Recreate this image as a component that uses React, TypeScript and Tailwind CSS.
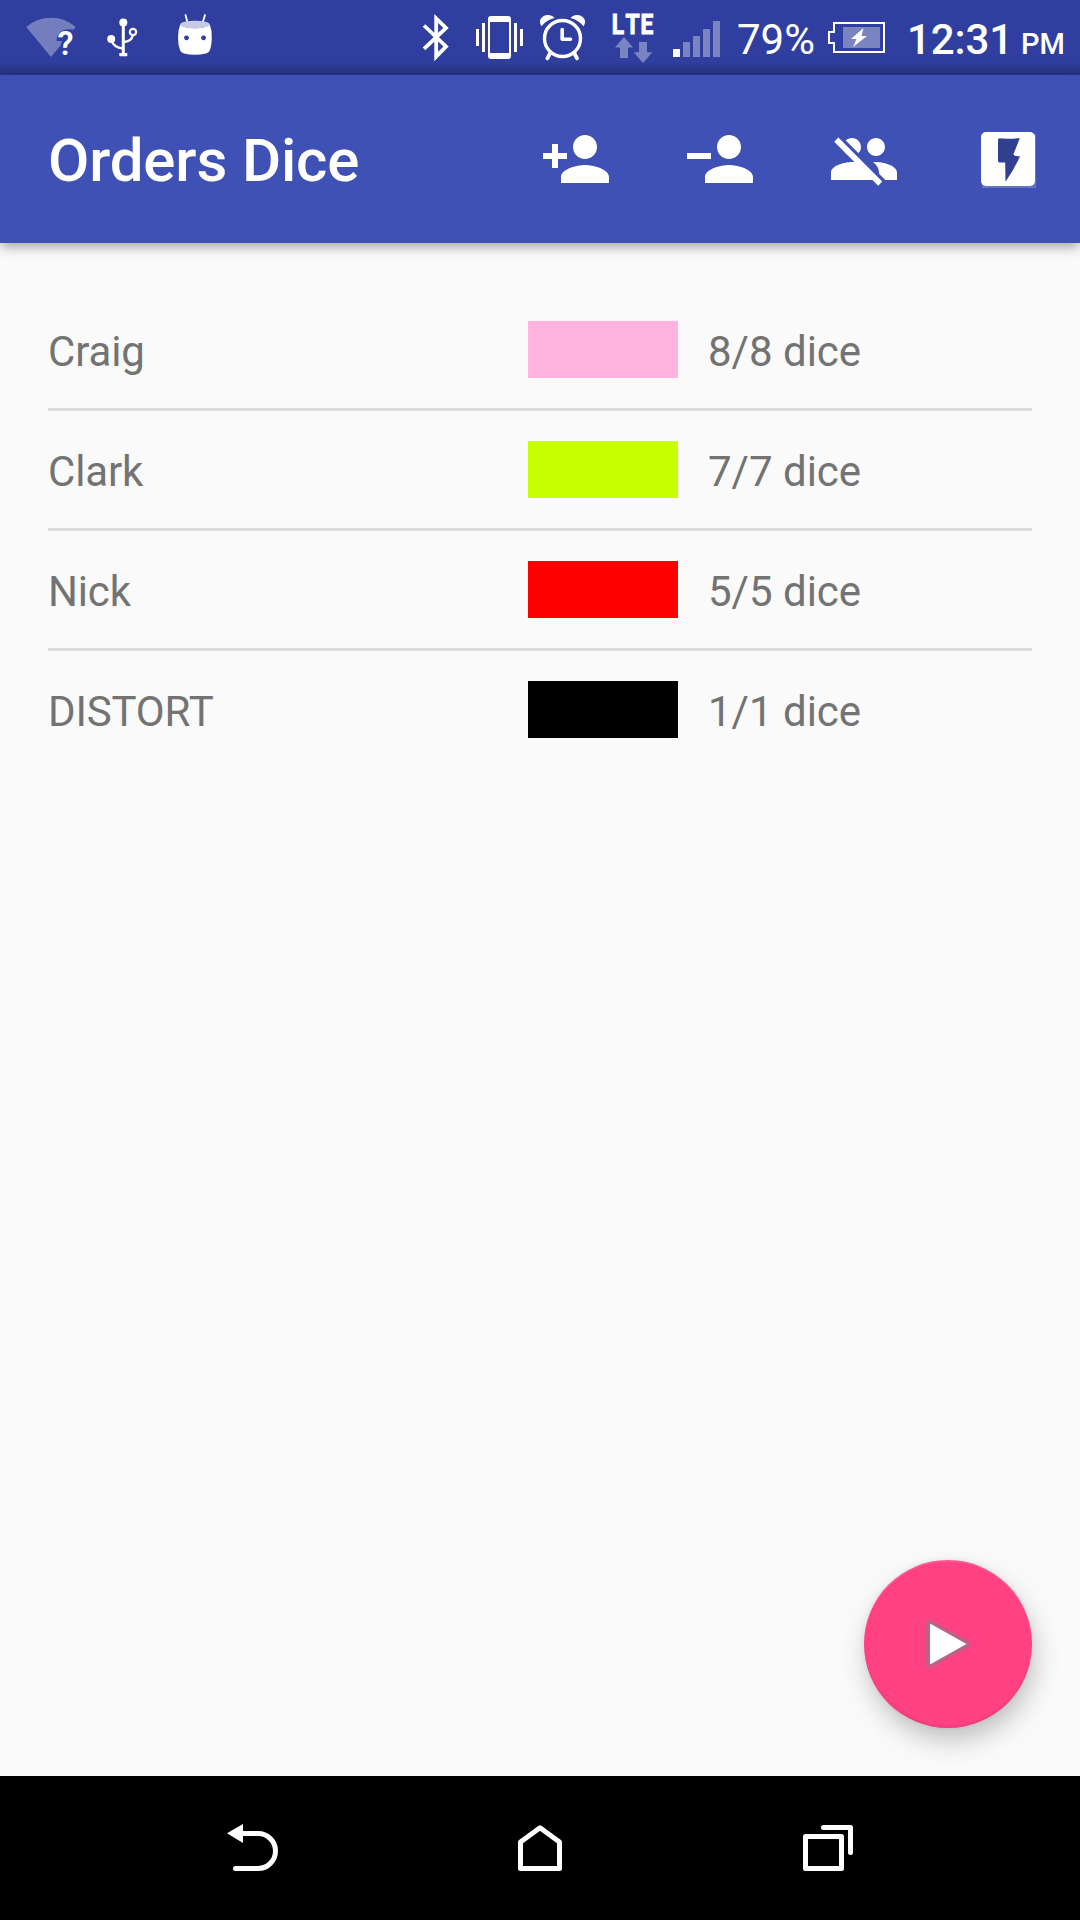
import React from "react";

type GlyphProps = { box: string; className: string; children: React.ReactNode };

function Glyph({ box, className, children }: GlyphProps) {
  return (
    <svg viewBox={box} className={`block shrink-0 ${className}`} fill="#fff" aria-hidden="true">
      {children}
    </svg>
  );
}

function StatusBar() {
  return (
    <div className="relative flex h-[75px] shrink-0 items-start overflow-hidden bg-[#303f9f] text-white">
      <Glyph box="26 0 50 75" className="ml-[26px] h-[75px] w-[50px]">
        <path d="M51 57 L26.3 27 Q37 17.7 51 17.7 Q65 17.7 75.7 27 L73.5 29.8 Q69 28.6 64 30 Q56 33 56.5 41 H62 L60.5 45.5 Z" opacity=".33" />
        <text x="57.6" y="55" fontSize="32.5" fontWeight="600" fontFamily="Roboto">?</text>
      </Glyph>
      <Glyph box="106 0 32 75" className="ml-[30px] h-[75px] w-8">
        <circle cx="123.3" cy="22.5" r="4" />
        <circle cx="111.2" cy="39" r="4" />
        <circle cx="133" cy="32" r="3.2" fill="none" stroke="#fff" strokeWidth="2.2" />
        <rect x="121.8" y="22" width="3" height="33" />
        <rect x="119.3" y="53" width="8" height="3.2" rx=".6" />
        <path d="M111.5 40 Q113.5 47.5 123 48.6 M123.5 42 Q131.5 41.5 132.7 35.5" fill="none" stroke="#fff" strokeWidth="2.4" />
      </Glyph>
      <Glyph box="177 0 36 75" className="ml-[39px] h-[75px] w-9">
        <path d="M185.5 15 L187.5 22.5 M205 15 L202.7 22.5" stroke="#fff" strokeWidth="1.8" strokeLinecap="round" />
        <ellipse cx="195" cy="24.5" rx="14.8" ry="3.8" fill="#c5cae6" />
        <path fillRule="evenodd" d="M180.2 24.5 C183 29.6 207 29.6 209.8 24.5 Q212 30 211.8 38 Q211.5 46 209.8 50.5 Q209 52.7 206 53.4 Q195 56.2 184 53.4 Q181 52.7 180.2 50.5 Q178 45 178 38 Q178 30 180.2 24.5Z M186.5 35.4a2.4 2.4 0 1 0 .01 0Z M203.5 35.4a2.4 2.4 0 1 0 .01 0Z" />
      </Glyph>

      <Glyph box="422 0 28 75" className="ml-[209px] h-[75px] w-7">
        <path d="M424 25.5 L446 46.5 L436.2 56.5 V18.5 L446 28 L424 48.8" fill="none" stroke="#fff" strokeWidth="3.8" />
      </Glyph>
      <Glyph box="475 0 49 75" className="ml-[25px] h-[75px] w-[49px]">
        <path d="M476 29h3v17h-3z M482 23h3v29h-3z M514 23h3v29h-3z M520 29h3v17h-3z" />
        <path fillRule="evenodd" d="M491 16h17a3 3 0 0 1 3 3v37a3 3 0 0 1-3 3h-17a3 3 0 0 1-3-3V19a3 3 0 0 1 3-3z M490 22v31h19V22z" />
      </Glyph>
      <Glyph box="539 0 47 75" className="ml-[15px] h-[75px] w-[47px]">
        <circle cx="562.5" cy="38.5" r="18" fill="none" stroke="#fff" strokeWidth="3.4" />
        <path d="M562.2 29.5 V39.2 H570.5" fill="none" stroke="#fff" strokeWidth="3.6" strokeLinecap="round" strokeLinejoin="round" />
        <path d="M541.4 26.3 Q538.6 21.5 541 18.4 Q544 14.5 549 15 Q552.8 15.6 554.6 18 Q546 20.2 541.4 26.3Z M583.6 26.3 Q586.4 21.5 584 18.4 Q581 14.5 576 15 Q572.2 15.6 570.4 18 Q579 20.2 583.6 26.3Z" />
        <path d="M550.2 53 L547.4 58.3 M574.2 53 L577 58.3" stroke="#fff" strokeWidth="3.8" strokeLinecap="round" />
      </Glyph>
      <Glyph box="611 0 46 75" className="ml-[25px] h-[75px] w-[46px]">
        <text transform="translate(611 33.6) scale(.8 1)" x="0.9 18 37" y="0" fontSize="28.5" fontWeight="700" fontFamily="Roboto" stroke="#fff" strokeWidth="1">LTE</text>
        <path d="M624 37 L633 47.5 H628 V58 H620 V47.5 H615Z M643 63 L652.3 52.3 H647 V42 H639 V52.3 H633.7Z" opacity=".36" />
      </Glyph>
      <Glyph box="673 0 47 75" className="ml-4 h-[75px] w-[47px]">
        <path d="M673 49h7v8h-7z" />
        <path d="M683 42h7v15h-7z M693 36h7v21h-7z M703 29h7v28h-7z M713 21h7v36h-7z" opacity=".36" />
      </Glyph>
      <span className="ml-[17px] w-[79px] whitespace-nowrap font-[Roboto,sans-serif] text-[42px] leading-[79px]">79%</span>
      <Glyph box="827 0 59 75" className="ml-[11px] h-[75px] w-[59px]">
        <path d="M834 23 H884 V52 H834 V43 H829 V32 H834Z" fill="none" stroke="#fff" strokeWidth="2" />
        <path d="M843 27h37v21h-37z" opacity=".36" />
        <path d="M863.5 28 L851 39 H856.5 L853 47 L867 36 H861.5Z" />
      </Glyph>
      <div className="ml-[21px] flex items-baseline whitespace-nowrap font-[Roboto,sans-serif] font-medium">
        <span className="w-[114px] text-[42px] leading-[79px] tracking-[-0.1px]">12:31</span>
        <span className="text-[29px] leading-none">PM</span>
      </div>
      <div className="absolute inset-x-0 bottom-0 h-[14px] bg-linear-to-b from-transparent to-black/20" />
    </div>
  );
}

const PERSON =
  "M15 12c2.21 0 4-1.79 4-4s-1.79-4-4-4-4 1.79-4 4 1.79 4 4 4zm0 2c-2.67 0-8 1.34-8 4v2h16v-2c0-2.66-5.33-4-8-4z";
const GROUP =
  "M16 11c1.66 0 2.99-1.34 2.99-3S17.66 5 16 5c-1.66 0-3 1.34-3 3s1.34 3 3 3zm-8 0c1.66 0 2.99-1.34 2.99-3S9.66 5 8 5C6.34 5 5 6.34 5 8s1.34 3 3 3zm0 2c-2.33 0-7 1.17-7 3.5V19h14v-2.5c0-2.33-4.67-3.5-7-3.5zm8 0c-.29 0-.62.02-.97.05 1.16.84 1.97 1.97 1.97 3.45V19h6v-2.5c0-2.33-4.67-3.5-7-3.5z";

function Toolbar() {
  return (
    <header className="relative flex h-[168px] shrink-0 items-start bg-[#3f51b5] pl-12 pr-9 text-white shadow-[0_5px_11px_-1px_rgba(0,0,0,0.34)]">
      <h1 className="flex-1 whitespace-nowrap font-[Roboto,sans-serif] text-[60px] font-medium leading-[172px] tracking-[-0.15px]">Orders Dice</h1>
      <div className="flex h-full items-center gap-[72px]">
        <button aria-label="Add player">
          <Glyph box="0 0 24 24" className="size-[72px]">
            <path d={PERSON} />
            <path d="M6 10V7H4v3H1v2h3v3h2v-3h3v-2z" />
          </Glyph>
        </button>
        <button aria-label="Remove player">
          <Glyph box="0 0 24 24" className="size-[72px]">
            <path d={PERSON} />
            <path d="M1 10h8v2H1z" />
          </Glyph>
        </button>
        <button aria-label="Clear players">
          <Glyph box="0 0 72 72" className="size-[72px]">
            <mask id="slash-gap">
              <rect width="72" height="72" fill="#fff" />
              <path d="M0 8 L0 -.3 L72 71.7 V80Z" fill="#000" />
            </mask>
            <g mask="url(#slash-gap)">
              <path d={GROUP} transform="scale(3)" />
            </g>
            <path d="M6.2 18.8 L10.4 14.6 L54.2 58.6 L50.2 62.8Z" />
          </Glyph>
        </button>
        <button aria-label="Distort">
          <Glyph box="0 0 72 72" className="size-[72px]">
            <path d="M10 11h54v54H10z" opacity=".2" />
            <rect x="9" y="9" width="54" height="54" rx="5" />
            <path d="M27 15.3 Q37 16.2 47.8 15 Q44.5 24 41.5 31 Q41 33.5 48 33.2 Q42 47 33.5 58.7 L33.2 39.6 H27 Q25.6 38.5 26 36 V16.5Z" fill="#303f8f" />
          </Glyph>
        </button>
      </div>
    </header>
  );
}

const players = [
  { name: "Craig", dice: "8/8 dice", swatch: "bg-[#ffb3de]" },
  { name: "Clark", dice: "7/7 dice", swatch: "bg-[#c8ff00]" },
  { name: "Nick", dice: "5/5 dice", swatch: "bg-[#ff0000]" },
  { name: "DISTORT", dice: "1/1 dice", swatch: "bg-black" },
];

function PlayerList() {
  return (
    <ul className="mx-12 mt-12 divide-y-[3px] divide-[#dbdbdb]">
      {players.map((p) => (
        <li key={p.name} className="flex items-start pt-[30px] pb-[26px] font-[Roboto,sans-serif] text-[42px] leading-[61px] text-[#737373]">
          <span className="w-[480px] tracking-[-0.15px]">{p.name}</span>
          <span className={`h-[57px] w-[150px] ${p.swatch}`} />
          <span className="ml-[30px]">{p.dice}</span>
        </li>
      ))}
    </ul>
  );
}

function NavBar() {
  return (
    <nav className="relative grid h-36 shrink-0 grid-cols-3 place-items-center bg-black px-[108px]">
      <button aria-label="Back">
        <Glyph box="222 1818 60 60" className="size-[60px]">
          <path d="M227 1833.3 L243 1824 V1843Z" />
          <path d="M241 1833.5 H258 A17.5 17.5 0 0 1 258 1868.5 H235.5" fill="none" stroke="#fff" strokeWidth="5" strokeLinecap="round" />
        </Glyph>
      </button>
      <button aria-label="Home">
        <Glyph box="510 1818 60 60" className="size-[60px]">
          <path d="M540 1827.8 L559.5 1842 V1868.5 H520.5 V1842Z" fill="none" stroke="#fff" strokeWidth="5" strokeLinejoin="round" />
        </Glyph>
      </button>
      <button aria-label="Recent apps">
        <Glyph box="798 1818 60 60" className="size-[60px]">
          <path d="M805.5 1836.5 H841.5 V1868.5 H805.5Z M823.5 1827.5 H850.5 V1852.5" fill="none" stroke="#fff" strokeWidth="5" strokeLinejoin="round" strokeLinecap="round" />
        </Glyph>
      </button>
    </nav>
  );
}

export default function App() {
  return (
    <div className="flex h-[1920px] w-[1080px] flex-col overflow-hidden bg-[#fafafa]">
      <StatusBar />
      <Toolbar />
      <main className="relative flex-1">
        <div className="flow-root">
          <PlayerList />
        </div>
        <button
          aria-label="Roll"
          className="absolute bottom-12 right-12 flex size-[168px] items-center justify-center rounded-full bg-[#ff4081] shadow-[3px_13px_28px_-2px_rgba(0,0,0,0.25),0_0_5px_rgba(0,0,0,0.07),inset_0_2px_1px_rgba(255,255,255,0.12),inset_0_-2px_1px_rgba(0,0,0,0.06)]"
        >
          <Glyph box="912 1608 72 72" className="size-[72px]">
            <path d="M930 1624 V1664 L966 1644Z" fill="#bd6085" stroke="#bd6085" strokeWidth="8" strokeLinejoin="round" />
            <path d="M930 1623.5 V1664.5 L966.5 1644Z" />
          </Glyph>
        </button>
      </main>
      <NavBar />
    </div>
  );
}
